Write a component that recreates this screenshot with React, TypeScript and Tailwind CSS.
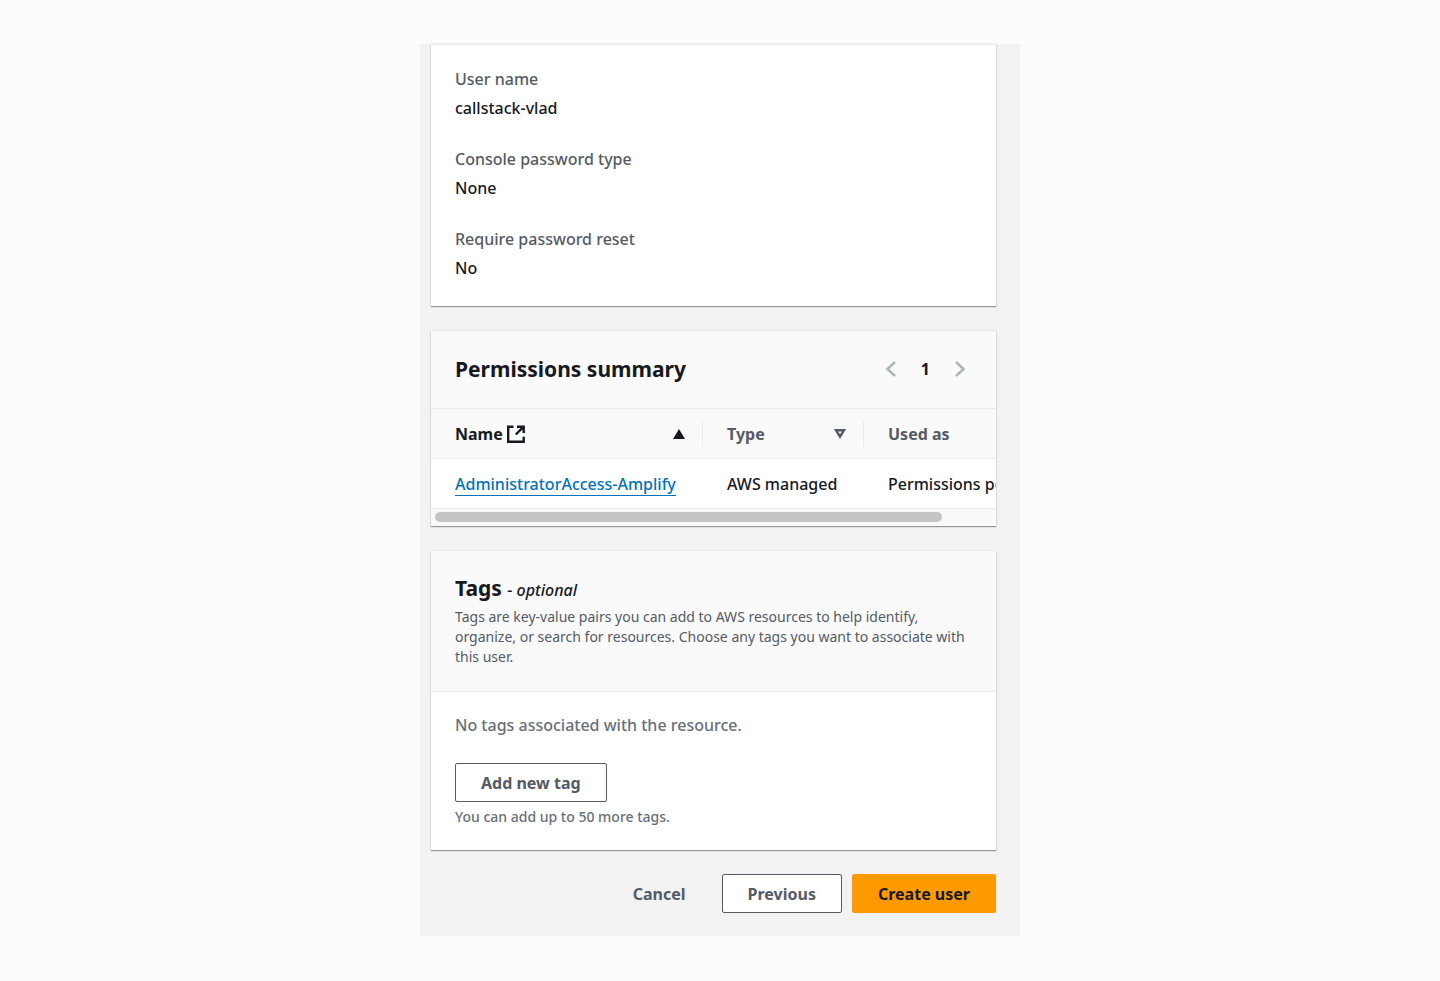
import type { ReactNode } from "react";

type Detail = {
  label: string;
  value: string;
};

const details: Detail[] = [
  { label: "User name", value: "callstack-vlad" },
  { label: "Console password type", value: "None" },
  { label: "Require password reset", value: "No" },
];

function Card({ children }: { children: ReactNode }) {
  return (
    <section className="overflow-hidden bg-white shadow-[0_1px_1px_0_rgba(0,0,0,0.25),0_0_1px_0_rgba(0,0,0,0.25),0_1px_1px_0_rgba(0,0,0,0.12)]">
      {children}
    </section>
  );
}

function Button({ children, variant = "normal" }: { children: ReactNode; variant?: "normal" | "link" | "primary" }) {
  const styles = {
    normal: "border-[#545b64] bg-white text-[#545b64]",
    link: "border-transparent text-[#545b64]",
    primary: "border-[#ff9900] bg-[#ff9900] text-[#16191f]",
  };

  return (
    <button type="button" className={`h-[39px] rounded-xs border px-[25px] text-[16px] font-bold ${styles[variant]}`}>
      {children}
    </button>
  );
}

function ExternalIcon() {
  return (
    <svg viewBox="0 0 18 18" className="size-[18px]" fill="none" stroke="currentColor" strokeWidth="2.4" aria-hidden="true">
      <path d="M6.5 1.700H1.200v15h15.500v-5" />
      <path d="M10 1.700h6.700V8M16.200 2.200 8.800 9.500" />
    </svg>
  );
}

export default function App() {
  return (
    <div className="min-h-screen bg-[#fcfcff] py-11 font-['Noto_Sans',sans-serif] text-[16px] leading-6 font-medium text-[#16191f]">
      <main className="mx-auto max-w-[600px] bg-[#f2f2f2] pr-6 pb-[23px] pl-[11px]">
        <div className="space-y-[25px]">
          <Card>
            <dl className="space-y-[27px] border-t border-[#eaeded] pt-[22px] pb-[26px] pl-6">
              {details.map((item) => (
                <div key={item.label} className="space-y-[5px]">
                  <dt className="text-[#545b64]">{item.label}</dt>
                  <dd>{item.value}</dd>
                </div>
              ))}
            </dl>
          </Card>

          <Card>
            <div className="flex h-[77px] items-center justify-between bg-[#fafafa] pr-[30px] pb-[2px] pl-6">
              <h2 className="text-[21px] font-bold">Permissions summary</h2>
              <nav aria-label="Pagination" className="flex items-center gap-6">
                <button type="button" aria-label="Previous page" className="text-[#aab7b8]">
                  <svg viewBox="0 0 12 16" className="h-4 w-3" fill="none" stroke="currentColor" strokeWidth="2.5">
                    <path d="M10 1 2.500 8 10 15" />
                  </svg>
                </button>
                <button type="button" className="font-bold">1</button>
                <button type="button" aria-label="Next page" className="text-[#aab7b8]">
                  <svg viewBox="0 0 12 16" className="h-4 w-3" fill="none" stroke="currentColor" strokeWidth="2.5">
                    <path d="M2 1 9.500 8 2 15" />
                  </svg>
                </button>
              </nav>
            </div>

            <div className="overflow-hidden">
              <table className="w-[632px] table-fixed border-collapse text-left whitespace-nowrap">
                <thead className="bg-[#fafafa]">
                  <tr className="h-[50px] border-y border-[#eaeded] text-[#545b64]">
                    <th className="w-[272px] p-0">
                      <div className="flex h-[26px] items-center justify-between border-r border-[#eaeded] pr-[17px] pl-6 text-[#16191f]">
                        <span className="flex items-center gap-1">
                          Name <ExternalIcon />
                        </span>
                        <svg viewBox="0 0 12 10" className="h-[10px] w-3" fill="currentColor" aria-hidden="true">
                          <path d="M6 0 12 10H0z" />
                        </svg>
                      </div>
                    </th>
                    <th className="w-[161px] p-0">
                      <div className="flex h-[26px] items-center justify-between border-r border-[#eaeded] pr-[17px] pl-6">
                        Type
                        <svg viewBox="0 0 12 10" className="h-[10px] w-3" fill="none" stroke="currentColor" strokeWidth="2.4" aria-hidden="true">
                          <path d="M2 1.200h8L6 7.700z" />
                        </svg>
                      </div>
                    </th>
                    <th className="py-0 pr-0 pl-6">Used as</th>
                  </tr>
                </thead>
                <tbody>
                  <tr className="h-[50px] border-b border-[#eaeded]">
                    <td className="py-0 pr-0 pl-6">
                      <a href="#policy" className="border-b border-[#0073bb] text-[#0073bb]">AdministratorAccess-Amplify</a>
                    </td>
                    <td className="py-0 pr-0 pl-6">AWS managed</td>
                    <td className="py-0 pr-0 pl-6">Permissions policy</td>
                  </tr>
                </tbody>
              </table>
            </div>
            <div className="bg-[#fafafa] px-1 pt-[3px] pb-1">
              <div className="h-[10px] w-[91%] rounded-full bg-[#c4c4c4]" />
            </div>
          </Card>

          <Card>
            <div className="border-b border-[#eaeded] bg-[#fafafa] px-6 pt-[25px] pb-6">
              <h2 className="text-[21px] font-bold">
                Tags <span className="text-[16px] font-medium">- <i>optional</i></span>
              </h2>
              <p className="mt-[5px] text-[14px] leading-5 font-normal text-[#545b64]">
                Tags are key-value pairs you can add to AWS resources to help identify, organize, or search for resources. Choose any tags you want to associate with this user.
              </p>
            </div>
            <div className="px-6 pt-[21px] pb-[23px]">
              <p className="mb-[26px] text-[#687078]">No tags associated with the resource.</p>
              <Button>Add new tag</Button>
              <p className="mt-[5px] text-[14px] leading-5 text-[#687078]">You can add up to 50 more tags.</p>
            </div>
          </Card>
        </div>

        <div className="mt-6 flex justify-end gap-[10px]">
          <Button variant="link">Cancel</Button>
          <Button>Previous</Button>
          <Button variant="primary">Create user</Button>
        </div>
      </main>
    </div>
  );
}
